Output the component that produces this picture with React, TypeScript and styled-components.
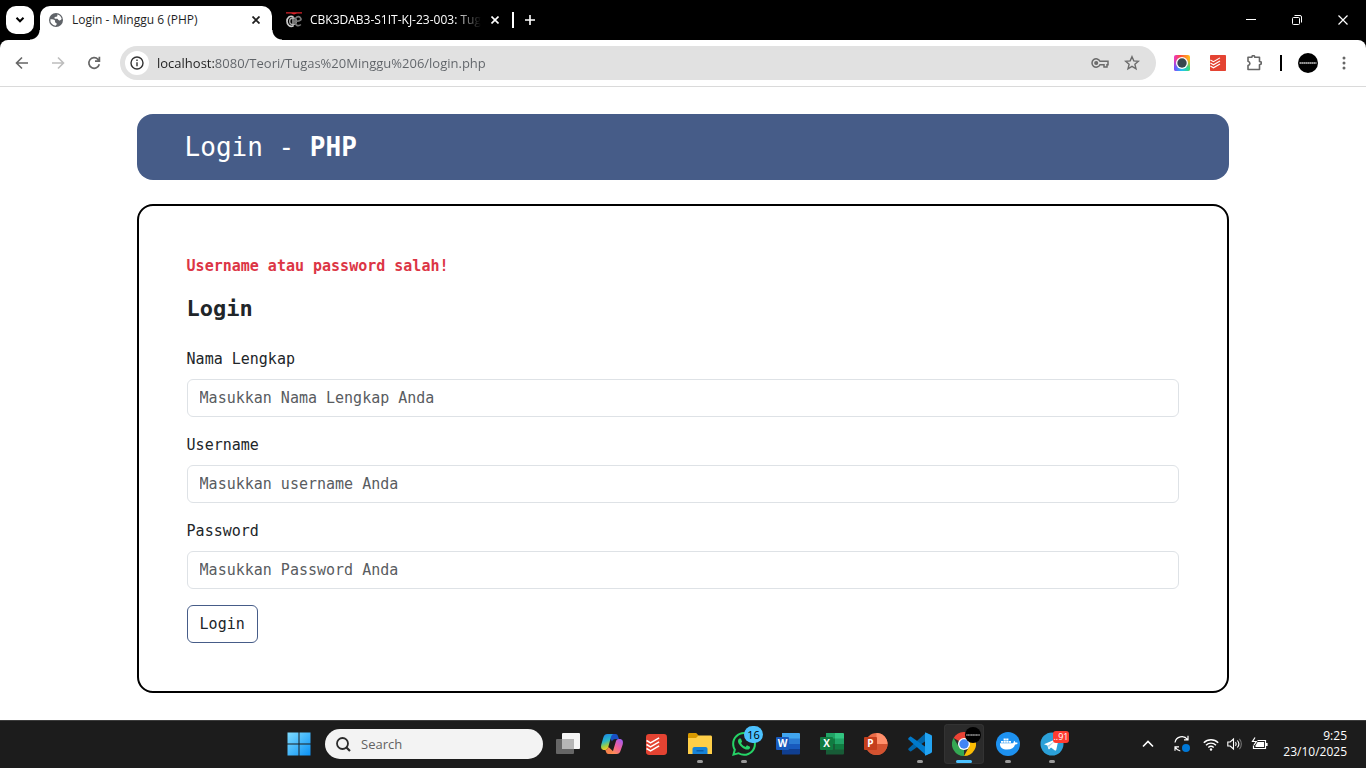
import React from "react";
import styled, { createGlobalStyle, css } from "styled-components";

const uiFont = `"Segoe UI", "Open Sans", "Noto Sans", sans-serif`;
const monoFont = `Consolas, "DejaVu Sans Mono", monospace`;

const GlobalStyle = createGlobalStyle`
  *, *::before, *::after { box-sizing: border-box; }
  body { margin: 0; background: #fff; color: #212529; font-family: ${uiFont}; }
  button, input { font: inherit; color: inherit; }
  button { padding: 0; border: 0; background: none; }
  svg { display: block; flex: none; }
`;

const Screen = styled.div`
  min-height: 100vh;
  display: flex;
  flex-direction: column;
`;

/* ---------- tab strip ---------- */

const TabStrip = styled.div`
  display: flex;
  align-items: center;
  height: 40px;
  padding-left: 6px;
  background: #000;
  color: #fff;
`;

const TabSearch = styled.button`
  display: grid;
  place-items: center;
  width: 28px;
  height: 28px;
  margin-right: 6px;
  border-radius: 10px;
  background: #fff;
  color: #000;
`;

const Tab = styled.div<{ $active?: boolean }>`
  position: relative;
  display: flex;
  align-items: center;
  align-self: flex-end;
  gap: 8px;
  height: 34px;
  padding: 0 8px 6px;
  font-size: 12px;
  line-height: 16px;
  width: ${(p) => (p.$active ? 232 : 238)}px;
  color: #fff;
  ${(p) => !p.$active && css`padding-left: 14px;`}
  ${(p) =>
    p.$active &&
    css`
      background: #fff;
      color: #1f1f1f;
      border-radius: 10px 10px 0 0;
      &::before,
      &::after {
        content: "";
        position: absolute;
        bottom: 0;
        width: 10px;
        height: 10px;
      }
      &::before {
        left: -10px;
        background: radial-gradient(circle at 0 0, transparent 9px, #fff 10px);
      }
      &::after {
        right: -10px;
        background: radial-gradient(circle at 100% 0, transparent 9px, #fff 10px);
      }
    `}
`;

const TabTitle = styled.span<{ $fade?: boolean }>`
  flex: 1;
  white-space: nowrap;
  ${(p) => p.$fade && css`mask-image: linear-gradient(90deg, #000 85%, transparent);`}
`;

const TabClose = styled.button`
  display: grid;
  place-items: center;
  width: 16px;
  height: 16px;
`;

const StripDivider = styled.span`
  width: 2px;
  height: 16px;
  margin: 0 8px 0 2px;
  background: #fff;
`;

const WindowControls = styled.div`
  display: flex;
  margin-left: auto;
`;

const WindowButton = styled.button`
  display: grid;
  place-items: center;
  width: 46px;
  height: 40px;
`;

/* ---------- address toolbar ---------- */

const ToolbarBack = styled.div`
  background: #000;
`;

const Toolbar = styled.div`
  display: flex;
  align-items: center;
  height: 47px;
  padding: 0 4px;
  border-bottom: 1px solid #dadada;
  border-radius: 8px 8px 0 0;
  background: #fff;
`;

const ToolButton = styled.button<{ $dim?: boolean }>`
  display: grid;
  place-items: center;
  width: 36px;
  height: 34px;
  color: ${(p) => (p.$dim ? "#bdbdbd" : "#666")};
`;

const AddressBar = styled.div`
  flex: 1;
  display: flex;
  align-items: center;
  height: 34px;
  margin: 0 8px;
  padding: 0 8px 0 5px;
  border-radius: 17px;
  background: #e1e1e1;
`;

const SiteInfo = styled.button`
  display: grid;
  place-items: center;
  width: 24px;
  height: 24px;
  margin-right: 8px;
  border-radius: 50%;
  background: #fff;
  color: #333;
`;

/* the host is drawn darker than the path that follows it */
const AddressInput = styled.input`
  flex: 1;
  min-width: 0;
  height: 24px;
  padding: 0;
  border: 0;
  outline: 0;
  font-size: 13px;
  color: #5f6368;
  background: linear-gradient(90deg, #1f1f1f 58px, #5f6368 58px);
  background-clip: text;
  -webkit-background-clip: text;
  -webkit-text-fill-color: transparent;
`;

const AddressAction = styled.button`
  display: grid;
  place-items: center;
  width: 32px;
  height: 24px;
  color: #6b6b6b;
`;

const ToolbarDivider = styled.span`
  width: 2px;
  height: 16px;
  margin: 0 8px;
  background: #000;
`;

/* ---------- page ---------- */

const Page = styled.main`
  flex: 1;
  display: flex;
  flex-direction: column;
  gap: 24px;
  width: 80%;
  margin: 0 auto;
  padding: 27px 0;
  font-family: ${monoFont};
`;

const Banner = styled.header`
  padding: 16px 48px;
  border-radius: 16px;
  background: #465c88;
  color: #fff;
`;

const BannerTitle = styled.h1`
  margin: 0;
  font-size: 26px;
  line-height: 34px;
  font-weight: 400;
`;

const Card = styled.section`
  padding: 48px;
  border: 2px solid #000;
  border-radius: 16px;
  font-size: 15px;
  line-height: 24px;
`;

const ErrorText = styled.p`
  margin: 0 0 16px;
  font-weight: 700;
  color: #dc3545;
`;

const CardTitle = styled.h2`
  margin: 0 0 24px;
  font-size: 22px;
  line-height: 29px;
  font-weight: 700;
`;

const Form = styled.form`
  display: flex;
  flex-direction: column;
  align-items: flex-start;
  gap: 16px;
`;

const Field = styled.div`
  display: flex;
  flex-direction: column;
  gap: 8px;
  width: 100%;
`;

const FieldInput = styled.input`
  height: 38px;
  padding: 0 12px;
  border: 1px solid #dee2e6;
  border-radius: 6px;
  background: #fff;
  &::placeholder {
    color: #595c5f;
    opacity: 1;
  }
`;

const SubmitButton = styled.button`
  height: 38px;
  padding: 0 12px;
  border: 1px solid #465c88;
  border-radius: 6px;
  background: #fff;
`;

/* ---------- taskbar ---------- */

const Taskbar = styled.footer`
  display: grid;
  grid-template-columns: 1fr auto 1fr;
  align-items: center;
  height: 48px;
  padding-right: 15px;
  box-shadow: inset 0 1px #3c3c3c;
  background: #1c1c1c;
  color: #fff;
`;

const TaskbarApps = styled.div`
  grid-column: 2;
  display: flex;
  align-items: center;
`;

const AppButton = styled.button<{ $active?: boolean }>`
  position: relative;
  display: grid;
  place-items: center;
  width: 40px;
  height: 40px;
  margin: 0 2px;
  border-radius: 4px;
  ${(p) => p.$active && css`background: #2b2b2b; box-shadow: inset 0 0 0 1px #333;`}
`;

const RunMark = styled.span<{ $active?: boolean }>`
  position: absolute;
  bottom: 1px;
  left: 50%;
  transform: translateX(-50%);
  width: ${(p) => (p.$active ? 16 : 6)}px;
  height: 3px;
  border-radius: 2px;
  background: ${(p) => (p.$active ? "#4cc2ff" : "#9a9a9a")};
`;

const Badge = styled.span<{ $tone: "blue" | "red" }>`
  position: absolute;
  display: grid;
  place-items: center;
  ${(p) =>
    p.$tone === "blue"
      ? css`top: 2px; right: 1px; width: 19px; height: 17px; border-radius: 9px;
            background: #4cc2ff; color: #000; font-size: 11px; line-height: 16px;`
      : css`top: 7px; right: 3px; width: 16px; height: 12px; border-radius: 3px;
            background: #ff3b30; color: #fff; font-size: 9px; line-height: 12px;`}
`;

const SearchBox = styled.label`
  display: flex;
  align-items: center;
  gap: 10px;
  width: 218px;
  height: 30px;
  margin: 0 3px 0 4px;
  padding: 0 11px;
  border-radius: 15px;
  background: #f3f3f3;
  color: #2b2b2b;
`;

const SearchInput = styled.input`
  flex: 1;
  min-width: 0;
  padding: 0;
  border: 0;
  outline: 0;
  background: none;
  font-size: 13px;
  &::placeholder {
    color: #626262;
    opacity: 1;
  }
`;

const Tray = styled.div`
  grid-column: 3;
  display: flex;
  align-items: center;
  justify-content: flex-end;
  padding-right: 4px;
`;

const TrayButton = styled.button<{ $wide?: boolean }>`
  display: grid;
  place-items: center;
  width: ${(p) => (p.$wide ? 34 : 24)}px;
  height: 40px;
`;

const Clock = styled.time`
  margin-left: 12px;
  font-size: 12px;
  line-height: 16px;
  text-align: right;
`;

/* ---------- icons ---------- */

const Cross = ({ s = 8, w = 2 }: { s?: number; w?: number }) => (
  <svg width={s} height={s} viewBox={`0 0 ${s} ${s}`} stroke="currentColor" strokeWidth={w} fill="none">
    <path d={`M.5 .5L${s - 0.5} ${s - 0.5}M${s - 0.5} .5L.5 ${s - 0.5}`} />
  </svg>
);

const Globe = () => (
  <svg width="16" height="16" viewBox="0 0 16 16">
    <circle cx="8" cy="8" r="7" fill="#5f6368" />
    <path fill="#fff" d="M2.4 7.2c2.300 0 4.200.2 4.600 1.300.4 1-.5 1.300.3 2.100.7.6 1.700.6 1.400 1.700-.2.700-.9 1-1.200 1.500A5.800 5.800 0 0 1 2.400 7.200zM9.200 2.400a5.800 5.800 0 0 1 4.500 4.700c-.9.700-1.300 1.700-2.500 1.400-1.300-.3-.7-1.300-1.800-1.700-.9-.3-2.200.4-2.800-.4-.6-.9.300-1.500 1.200-1.700 1-.2 1.500-.1 1.600-1 .1-.5-.2-.9-.2-1.300z" />
  </svg>
);

const CampusLogo = () => (
  <svg width="16" height="16" viewBox="0 0 16 16" fill="none">
    <path d="M0 .2h16v1.400h-5L8 2.500 5 1.600H0z" fill="#d8232a" />
    <path d="M7.500 4.700C3.500 3.200 1 6 1 9.300s2.500 6.200 6.500 4.700" stroke="#ccc" strokeWidth="1.700" />
    <circle cx="7" cy="9.300" r="3.300" stroke="#aaa" strokeWidth="1.400" />
    <path d="M7 5v9" stroke="#bbb" strokeWidth="1.300" />
    <path d="M14.800 12.500c-2.200 2.200-6 1.200-6-3.200s3.600-5.600 5.500-3.600c1.500 1.700.7 3.700-4.800 3.700" stroke="#777" strokeWidth="1.700" />
  </svg>
);

const Todoist = ({ size, radius }: { size: number; radius: number }) => (
  <svg width={size} height={size} viewBox="0 0 20 20">
    <rect width="20" height="20" rx={radius} fill="#e44332" />
    <g fill="none" stroke="#fff" strokeWidth="1.400">
      <path d="M.5 6.200l3.800 2.200L12.500 3.600M.5 10l3.800 2.200 8.200-4.800M.5 13.800L4.300 16l8.200-4.800" />
    </g>
  </svg>
);

const WinLogo = () => (
  <svg width="24" height="24" viewBox="0 0 24 24">
    <defs>
      <linearGradient id="win" x1="0" y1="0" x2="1" y2="1">
        <stop offset="0" stopColor="#7fdcff" />
        <stop offset="1" stopColor="#0a91f5" />
      </linearGradient>
    </defs>
    <path fill="url(#win)" d="M.5 .5h11v11H.5zM12.500 .5h11v11h-11zM.5 12.500h11v11H.5zM12.500 12.500h11v11h-11z" />
  </svg>
);

const TaskView = () => (
  <svg width="24" height="24" viewBox="0 0 24 24">
    <rect x="6" y="1" width="18" height="16" rx="1" fill="#f4f4f4" />
    <rect x="0" y="7" width="18" height="15" rx="1" fill="#666" />
    <path d="M6 7h12v10H6z" fill="#b5b5b5" />
  </svg>
);

const Copilot = () => (
  <svg width="24" height="24" viewBox="0 0 24 24">
    <defs>
      <linearGradient id="cpa" x1="0" y1="0" x2=".3" y2="1">
        <stop offset="0" stopColor="#1c7de8" />
        <stop offset=".5" stopColor="#28b8c8" />
        <stop offset=".8" stopColor="#a6ce3c" />
        <stop offset="1" stopColor="#f7c82c" />
      </linearGradient>
      <linearGradient id="cpb" x1=".8" y1="0" x2=".2" y2="1">
        <stop offset="0" stopColor="#a65cf0" />
        <stop offset=".5" stopColor="#f0609a" />
        <stop offset="1" stopColor="#ff9350" />
      </linearGradient>
    </defs>
    <path fill="#1850c4" d="M8 2h7.500c1.500 0 2 .8 2.500 2.200L19 7h-3.500c-2 0-3 1-3.500 2.500z" />
    <path fill="url(#cpa)" d="M7.500 2h6c-1.700.6-2.300 2-2.800 4L8.300 15c-.5 2-1.300 3-3 3H4.500C1.500 18 .5 15.800 1.300 12.500L3.200 6C4 3.300 5 2 7.500 2z" />
    <path fill="#f8844c" d="M16 22H8.500C7 22 6.500 21.200 6 19.800L5.300 18c2 0 2.700-1.500 3.200-3z" />
    <path fill="url(#cpb)" d="M16.500 22h-6c1.700-.6 2.300-2 2.800-4l2.400-8c.5-2 1.300-3 3-3h.8c3 0 4 2.200 3.200 5.500L20.800 18c-.8 2.700-1.800 4-4.300 4z" />
  </svg>
);

const Explorer = () => (
  <svg width="24" height="24" viewBox="0 0 24 24">
    <path fill="#d99a00" d="M0 2.500C0 1.700.6 1 1.400 1h6.800l2.600 2.800V8H0z" />
    <path fill="#ffcf48" d="M0 6h8l2.500-2.500h12c.9 0 1.500.6 1.500 1.400V22H0z" />
    <path fill="#1683d8" d="M4.500 22v-5c0-1.200.8-2 2-2h11c1.200 0 2 .8 2 2v5z" />
    <path fill="#0a5ca8" d="M8.500 18h7v1.500h-7z" />
  </svg>
);

const WhatsApp = () => (
  <svg width="24" height="24" viewBox="0 0 24 24">
    <path fill="#25d366" d="M17.472 14.382c-.297-.149-1.758-.867-2.030-.967-.273-.099-.471-.148-.67.150-.197.297-.767.966-.94 1.164-.173.199-.347.223-.644.075-.297-.15-1.255-.463-2.390-1.475-.883-.788-1.480-1.761-1.653-2.059-.173-.297-.018-.458.130-.606.134-.133.298-.347.446-.520.149-.174.198-.298.298-.497.099-.198.050-.371-.025-.520-.075-.149-.669-1.612-.916-2.207-.242-.579-.487-.5-.669-.510-.173-.008-.371-.010-.570-.010-.198 0-.520.074-.792.372-.272.297-1.040 1.016-1.040 2.479 0 1.462 1.065 2.875 1.213 3.074.149.198 2.096 3.200 5.077 4.487.709.306 1.262.489 1.694.625.712.227 1.360.195 1.871.118.571-.085 1.758-.719 2.006-1.413.248-.694.248-1.289.173-1.413-.074-.124-.272-.198-.570-.347m-5.421 7.403h-.004a9.870 9.870 0 0 1-5.031-1.378l-.361-.214-3.741.982.998-3.648-.235-.374a9.860 9.860 0 0 1-1.510-5.260c.001-5.450 4.436-9.884 9.888-9.884 2.640 0 5.122 1.030 6.988 2.898a9.825 9.825 0 0 1 2.893 6.994c-.003 5.450-4.437 9.884-9.885 9.884m8.413-18.297A11.815 11.815 0 0 0 12.050 0C5.495 0 .160 5.335.157 11.892c0 2.096.547 4.142 1.588 5.945L.057 24l6.305-1.654a11.882 11.882 0 0 0 5.683 1.448h.005c6.554 0 11.890-5.335 11.893-11.893a11.821 11.821 0 0 0-3.480-8.413z" />
  </svg>
);

const OfficeTile = styled.span<{ $tone: string }>`
  position: absolute;
  left: 8px;
  top: 13px;
  display: grid;
  place-items: center;
  width: 13px;
  height: 13px;
  border-radius: 1px;
  background: ${(p) => p.$tone};
  color: #fff;
  font: 700 10px/13px ${uiFont};
`;

const WordSheet = () => (
  <svg width="24" height="24" viewBox="0 0 24 24">
    <path fill="#41a5ee" d="M6 1h17a1 1 0 0 1 1 1v5H6z" />
    <path fill="#2b7cd3" d="M6 6.500h18V12H6z" />
    <path fill="#185abd" d="M6 12h18v5.500H6z" />
    <path fill="#103f91" d="M6 17h18v4.500a1 1 0 0 1-1 1H6z" />
  </svg>
);

const ExcelSheet = () => (
  <svg width="24" height="24" viewBox="0 0 24 24">
    <path fill="#21a366" d="M6 1h9v6H6z" />
    <path fill="#33c481" d="M15 1h8a1 1 0 0 1 1 1v5h-9z" />
    <path fill="#107c41" d="M6 6.500h9V12H6z" />
    <path fill="#21a366" d="M15 6.500h9V12h-9z" />
    <path fill="#185c37" d="M6 12h9v10.500H6zM15 17h9v4.500a1 1 0 0 1-1 1h-8z" />
    <path fill="#107c41" d="M15 12h9v5.500h-9z" />
  </svg>
);

const SlideDisc = () => (
  <svg width="24" height="24" viewBox="0 0 24 24">
    <circle cx="12.500" cy="12" r="11" fill="#ed6c47" />
    <path fill="#ff8f6b" d="M12.500 1a11 11 0 0 1 11 11h-11z" />
    <path fill="#d35230" d="M1.500 12h22a11 11 0 0 1-22 0z" />
  </svg>
);

const VsCode = () => (
  <svg width="24" height="24" viewBox="0 0 24 24">
    <path fill="#0065a9" d="M23 3.200L18 .8 .5 16.500c-.4.400-.4 1 0 1.400L2 19.200c.4.300.9.3 1.200.1L24 4.500z" />
    <path fill="#007acc" d="M23 20.800l-5 2.400L.5 7.500c-.4-.4-.4-1 0-1.400L2 4.800c.4-.3.900-.3 1.200-.1L24 19.500z" />
    <path fill="#23a4f2" d="M17 .7c.4-.3.700-.2 1.100 0l5 2.400c.6.300.9.800.9 1.400v15c0 .6-.3 1.100-.9 1.400l-5 2.400c-.4.200-.7.300-1.100 0z" />
  </svg>
);

const Chrome = () => (
  <svg width="24" height="24" viewBox="0 0 24 24">
    <path fill="#ea4335" d="M12 12L1.600 6A12 12 0 0 1 22.400 6z" />
    <path fill="#34a853" d="M12 12v12A12 12 0 0 1 1.600 6L7 15z" />
    <path fill="#fbbc04" d="M12 6h10.400A12 12 0 0 1 12 24l5-9z" />
    <circle cx="12" cy="12" r="6" fill="#fff" />
    <circle cx="12" cy="12" r="4.700" fill="#4285f4" />
  </svg>
);

const ProfileMark = styled.svg.attrs({ viewBox: "0 0 20 20" })<{ $badge?: boolean }>`
  width: ${(p) => (p.$badge ? 16 : 20)}px;
  height: ${(p) => (p.$badge ? 16 : 20)}px;
  ${(p) => p.$badge && css`position: absolute; top: 3px; right: 3px;`}
`;

const Profile = ({ badge }: { badge?: boolean }) => (
  <ProfileMark $badge={badge}>
    <circle cx="10" cy="10" r="10" fill="#000" />
    <path d="M1.500 10h17" stroke="#bbb" strokeWidth="1.800" strokeDasharray="1.700 .3" opacity=".8" />
  </ProfileMark>
);

const Docker = () => (
  <svg width="24" height="24" viewBox="0 0 24 24">
    <circle cx="12" cy="12" r="12" fill="#1d91f0" />
    <path fill="#fff" d="M4 11.200h13c.7 0 .6-1.700 1.100-2.500 1 .6 1.200 1.300 1.200 1.900 1 0 1.800 0 2.500.5-.6 1-1.600 1.500-2.700 1.500-1 3.300-3.500 5-8 5-4.300 0-7.500-2-7.100-6.400z" />
    <path fill="#fff" d="M5 8.900h2.200v1.900H5zM7.600 8.900h2.200v1.900H7.600zM10.200 8.900h2.200v1.900h-2.200zM12.800 8.900H15v1.900h-2.200zM7.600 6.600h2.200v1.900H7.600zM10.200 6.600h2.200v1.900h-2.200z" />
  </svg>
);

const Telegram = () => (
  <svg width="24" height="24" viewBox="0 0 24 24">
    <circle cx="12" cy="12" r="11.500" fill="#2ba0d8" />
    <path fill="#fff" d="M4.500 12L17.500 6.600c.8-.3 1.200.1 1 1l-2.200 10.200c-.2.900-.8 1-1.400.6L11 15.500l-1.700 1.700c-.3.300-.8.100-.9-.3l-1-3.400-2.800-.9c-.5-.1-.5-.4-.1-.6z" />
    <path d="M8 13.500l7.500-4.900-6 5.700-.3 2.500" fill="#a9cfe4" />
  </svg>
);

const stroke = { fill: "none", stroke: "currentColor" } as const;

const fields = [
  { id: "nama", label: "Nama Lengkap", hint: "Masukkan Nama Lengkap Anda", type: "text" },
  { id: "username", label: "Username", hint: "Masukkan username Anda", type: "text" },
  { id: "password", label: "Password", hint: "Masukkan Password Anda", type: "password" },
];

const BrowserTabs = () => (
  <TabStrip>
    <TabSearch aria-label="Search tabs">
      <svg width="10" height="6" viewBox="0 0 10 6" {...stroke} strokeWidth="2"><path d="M1.500 .8L5 4.300 8.500 .8" /></svg>
    </TabSearch>
    <Tab $active>
      <Globe />
      <TabTitle>Login - Minggu 6 (PHP)</TabTitle>
      <TabClose aria-label="Close tab"><Cross w={1.8} /></TabClose>
    </Tab>
    <Tab>
      <CampusLogo />
      <TabTitle $fade>CBK3DAB3-S1IT-KJ-23-003: Tug</TabTitle>
      <TabClose aria-label="Close tab"><Cross w={1.6} /></TabClose>
    </Tab>
    <StripDivider />
    <TabClose aria-label="New tab">
      <svg width="10" height="10" viewBox="0 0 10 10" {...stroke} strokeWidth="1.600"><path d="M5 0v10M0 5h10" /></svg>
    </TabClose>
    <WindowControls>
      <WindowButton aria-label="Minimize">
        <svg width="10" height="10" viewBox="0 0 10 10" {...stroke}><path d="M0 4.500h10" /></svg>
      </WindowButton>
      <WindowButton aria-label="Restore">
        <svg width="10" height="10" viewBox="0 0 10 10" {...stroke}>
          <rect x=".5" y="2.500" width="7" height="7" rx="1" />
          <path d="M2.500 .5H8a1.500 1.500 0 0 1 1.500 1.500v5.500" />
        </svg>
      </WindowButton>
      <WindowButton aria-label="Close"><Cross s={10} w={1.2} /></WindowButton>
    </WindowControls>
  </TabStrip>
);

const BrowserToolbar = () => (
  <ToolbarBack>
    <Toolbar>
      <ToolButton aria-label="Back">
        <svg width="16" height="16" viewBox="0 0 16 16" {...stroke} strokeWidth="1.600"><path d="M14 8H3M8 2.500L2.500 8 8 13.500" /></svg>
      </ToolButton>
      <ToolButton aria-label="Forward" $dim>
        <svg width="16" height="16" viewBox="0 0 16 16" {...stroke} strokeWidth="1.600"><path d="M2 8h11M8 2.500L13.500 8 8 13.500" /></svg>
      </ToolButton>
      <ToolButton aria-label="Reload">
        <svg width="16" height="16" viewBox="0 0 16 16" {...stroke} strokeWidth="1.700"><path d="M13.300 9.300A5.300 5.300 0 1 1 12 4.300L13.300 5.700M13.400 1.800v4.400H9" /></svg>
      </ToolButton>
      <AddressBar>
        <SiteInfo aria-label="Site information">
          <svg width="14" height="14" viewBox="0 0 14 14" {...stroke} strokeWidth="1.400">
            <circle cx="7" cy="7" r="6" /><path d="M7 6.200v4M7 3.600v1.500" />
          </svg>
        </SiteInfo>
        <AddressInput aria-label="Address" defaultValue="localhost:8080/Teori/Tugas%20Minggu%206/login.php" />
        <AddressAction aria-label="Passwords">
          <svg width="18" height="12" viewBox="0 0 18 12" {...stroke} strokeWidth="1.500">
            <path d="M9 4.200h8v3.600h-1v2.200h-3V7.800H9A4.200 4.200 0 1 1 9 4.200z" /><circle cx="5.200" cy="6" r="1.300" fill="currentColor" />
          </svg>
        </AddressAction>
        <AddressAction aria-label="Bookmark">
          <svg width="16" height="16" viewBox="0 0 16 16" {...stroke} strokeWidth="1.400"><path d="M8 1.700l1.800 4.200 4.600.4-3.500 3 1.100 4.500L8 11.400l-4 2.400 1.100-4.500-3.500-3 4.600-.4z" /></svg>
        </AddressAction>
      </AddressBar>
      <ToolButton aria-label="Colour picker">
        <svg width="16" height="16" viewBox="0 0 16 16">
          <defs>
            <linearGradient id="rb1" x1="0" x2="1"><stop offset="0" stopColor="#e838c8" /><stop offset=".4" stopColor="#ff4b3a" /><stop offset="1" stopColor="#ffc21a" /></linearGradient>
            <linearGradient id="rb2" x1="0" x2="1"><stop offset="0" stopColor="#7a48ff" /><stop offset=".5" stopColor="#20c4f4" /><stop offset="1" stopColor="#38dc70" /></linearGradient>
            <linearGradient id="rbm" x1="0" y1="0" x2="0" y2="1"><stop offset=".3" stopColor="#fff" stopOpacity="0" /><stop offset=".8" stopColor="#fff" /></linearGradient>
            <mask id="lower"><rect width="16" height="16" fill="url(#rbm)" /></mask>
          </defs>
          <rect width="16" height="16" rx="2" fill="url(#rb1)" />
          <rect width="16" height="16" rx="2" fill="url(#rb2)" mask="url(#lower)" />
          <circle cx="8" cy="8" r="6" fill="#fff" /><circle cx="8" cy="8" r="4.700" fill="#37474f" />
        </svg>
      </ToolButton>
      <ToolButton aria-label="Todoist"><Todoist size={16} radius={1} /></ToolButton>
      <ToolButton aria-label="Extensions">
        <svg width="18" height="18" viewBox="0 0 18 18" {...stroke} strokeWidth="1.600">
          <path d="M3 3.300h3.800l.5-1.500h2l.5 1.500h4.700v4.200l1.700.6v2l-1.700.6v4.800H3v-3.900c1.400-.5 1.900-1.300 1.900-2.200S4.400 7.700 3 7.200z" strokeLinejoin="round" />
        </svg>
      </ToolButton>
      <ToolbarDivider />
      <ToolButton aria-label="Profile"><Profile /></ToolButton>
      <ToolButton aria-label="Menu">
        <svg width="4" height="16" viewBox="0 0 4 16" fill="currentColor"><circle cx="2" cy="3" r="1.500" /><circle cx="2" cy="8" r="1.500" /><circle cx="2" cy="13" r="1.500" /></svg>
      </ToolButton>
    </Toolbar>
  </ToolbarBack>
);

const LoginPage = () => (
  <Page>
    <Banner>
      <BannerTitle>Login - <strong>PHP</strong></BannerTitle>
    </Banner>
    <Card>
      <ErrorText>Username atau password salah!</ErrorText>
      <CardTitle>Login</CardTitle>
      <Form onSubmit={(e) => e.preventDefault()}>
        {fields.map((f) => (
          <Field key={f.id}>
            <label htmlFor={f.id}>{f.label}</label>
            <FieldInput id={f.id} name={f.id} type={f.type} placeholder={f.hint} />
          </Field>
        ))}
        <SubmitButton type="submit">Login</SubmitButton>
      </Form>
    </Card>
  </Page>
);

const DesktopTaskbar = () => (
  <Taskbar>
    <TaskbarApps>
      <AppButton aria-label="Start"><WinLogo /></AppButton>
      <SearchBox>
        <svg width="15" height="15" viewBox="0 0 15 15" {...stroke} strokeWidth="1.800"><circle cx="6.500" cy="6.500" r="5.500" /><path d="M10.500 10.500L14 14" strokeWidth="2.200" /></svg>
        <SearchInput aria-label="Search" placeholder="Search" />
      </SearchBox>
      <AppButton aria-label="Task view"><TaskView /></AppButton>
      <AppButton aria-label="Copilot"><Copilot /></AppButton>
      <AppButton aria-label="Todoist"><Todoist size={21} radius={3} /></AppButton>
      <AppButton aria-label="File Explorer"><Explorer /><RunMark /></AppButton>
      <AppButton aria-label="WhatsApp"><WhatsApp /><Badge $tone="blue">16</Badge><RunMark /></AppButton>
      <AppButton aria-label="Word"><WordSheet /><OfficeTile $tone="#185abd">W</OfficeTile></AppButton>
      <AppButton aria-label="Excel"><ExcelSheet /><OfficeTile $tone="#107c41">X</OfficeTile></AppButton>
      <AppButton aria-label="PowerPoint"><SlideDisc /><OfficeTile $tone="#c43e1c">P</OfficeTile></AppButton>
      <AppButton aria-label="Visual Studio Code"><VsCode /><RunMark /></AppButton>
      <AppButton aria-label="Chrome" $active><Chrome /><Profile badge /><RunMark $active /></AppButton>
      <AppButton aria-label="Docker"><Docker /><RunMark /></AppButton>
      <AppButton aria-label="Telegram"><Telegram /><Badge $tone="red">..91</Badge><RunMark /></AppButton>
    </TaskbarApps>
    <Tray>
      <TrayButton $wide aria-label="Hidden icons">
        <svg width="12" height="8" viewBox="0 0 12 8" {...stroke} strokeWidth="1.600"><path d="M1 6.500l5-5 5 5" /></svg>
      </TrayButton>
      <TrayButton $wide aria-label="Updates">
        <svg width="18" height="18" viewBox="0 0 18 18" {...stroke} strokeWidth="1.200">
          <path d="M2 7.500a7 7 0 0 1 12.500-3M15 .8v4h-4M6 11.800H2v4M2.300 12.300a7 7 0 0 0 5 3.700" />
          <circle cx="13" cy="13" r="4" fill="#0078d7" stroke="none" />
        </svg>
      </TrayButton>
      <TrayButton aria-label="Network">
        <svg width="16" height="13" viewBox="0 0 16 13" {...stroke} strokeWidth="1.400">
          <path d="M.8 4.800a10 10 0 0 1 14.400 0M3 7.200a7 7 0 0 1 10 0M5.300 9.500a4 4 0 0 1 5.400 0" /><circle cx="8" cy="11.500" r="1.200" fill="currentColor" stroke="none" />
        </svg>
      </TrayButton>
      <TrayButton aria-label="Volume">
        <svg width="16" height="14" viewBox="0 0 16 14" {...stroke} strokeWidth="1.100">
          <path d="M.8 5v4h2.400L6.500 12V2L3.200 5zM8.500 5.200a3 3 0 0 1 0 3.600M10.400 3.500a5.400 5.400 0 0 1 0 7" /><path d="M12.400 1.800a8 8 0 0 1 0 10.400" opacity=".4" />
        </svg>
      </TrayButton>
      <TrayButton aria-label="Battery">
        <svg width="17" height="14" viewBox="0 0 17 14" {...stroke} strokeWidth="1.200">
          <path d="M6.500 3.500h8v8H2.500V8.500" /><path d="M6.500 5H13v5H4.500V8.500z" fill="currentColor" stroke="none" /><path d="M15.800 6v3" strokeWidth="1.600" /><path d="M4 .5L1.500 4.500h3.800L3 8" />
        </svg>
      </TrayButton>
      <Clock>9:25<br />23/10/2025</Clock>
    </Tray>
  </Taskbar>
);

export default function App() {
  return (
    <Screen>
      <GlobalStyle />
      <BrowserTabs />
      <BrowserToolbar />
      <LoginPage />
      <DesktopTaskbar />
    </Screen>
  );
}
